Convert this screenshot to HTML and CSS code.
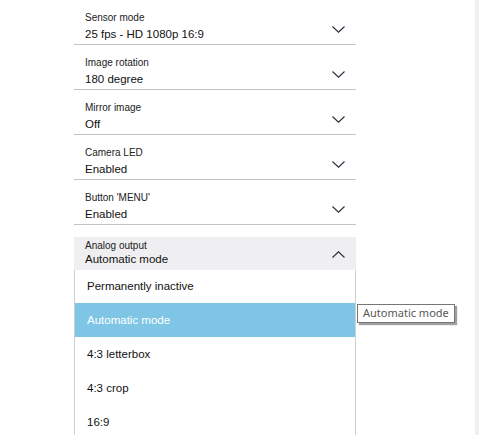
FILE: index.html
```html
<!DOCTYPE html>
<html>
<head>
<meta charset="utf-8">
<link rel="stylesheet" href="styles.css">
</head>
<body>
<div class="page">
  <div class="form">
    <div class="field">
      <div class="text"><div class="label">Sensor mode</div><div class="value">25 fps - HD 1080p 16:9</div></div>
      <svg class="chev" width="13" height="7" viewBox="0 0 13 7"><polyline points="0.5,0.5 6.5,6.2 12.5,0.5" /></svg>
    </div>
    <div class="field">
      <div class="text"><div class="label">Image rotation</div><div class="value">180 degree</div></div>
      <svg class="chev" width="13" height="7" viewBox="0 0 13 7"><polyline points="0.5,0.5 6.5,6.2 12.5,0.5" /></svg>
    </div>
    <div class="field">
      <div class="text"><div class="label">Mirror image</div><div class="value">Off</div></div>
      <svg class="chev" width="13" height="7" viewBox="0 0 13 7"><polyline points="0.5,0.5 6.5,6.2 12.5,0.5" /></svg>
    </div>
    <div class="field">
      <div class="text"><div class="label">Camera LED</div><div class="value">Enabled</div></div>
      <svg class="chev" width="13" height="7" viewBox="0 0 13 7"><polyline points="0.5,0.5 6.5,6.2 12.5,0.5" /></svg>
    </div>
    <div class="field">
      <div class="text"><div class="label">Button 'MENU'</div><div class="value">Enabled</div></div>
      <svg class="chev" width="13" height="7" viewBox="0 0 13 7"><polyline points="0.5,0.5 6.5,6.2 12.5,0.5" /></svg>
    </div>
    <div class="field open">
      <div class="text"><div class="label">Analog output</div><div class="value">Automatic mode</div></div>
      <svg class="chev" width="13" height="7" viewBox="0 0 13 7"><polyline points="0.5,6.5 6.5,0.8 12.5,6.5" /></svg>
    </div>
    <ul class="menu">
      <li>Permanently inactive</li>
      <li class="sel">Automatic mode</li>
      <li>4:3 letterbox</li>
      <li>4:3 crop</li>
      <li>16:9</li>
    </ul>
  </div>
  <div class="tooltip">Automatic mode</div>
  <div class="scroll"></div>
</div>
</body>
</html>
```
FILE: styles.css
```css
html, body {
  margin: 0;
  padding: 0;
  background: #ffffff;
  width: 479px;
  height: 435px;
  overflow: hidden;
}
.page {
  position: relative;
  width: 479px;
  height: 435px;
  font-family: "Liberation Sans", Arial, sans-serif;
  color: #1a1a1a;
}
.form {
  margin-left: 74px;
  width: 282px;
}
.field {
  display: flex;
  align-items: flex-start;
  justify-content: space-between;
  padding: 12px 11px 3px 11px;
  height: 29px;
  border-bottom: 1px solid #c4c4c4;
}
.text {
  display: flex;
  flex-direction: column;
}
.label {
  font-size: 10px;
  line-height: 12px;
  color: #222;
}
.value {
  font-size: 11.5px;
  line-height: 14px;
  margin-top: 3px;
  color: #111;
}
.chev {
  margin-top: 14px;
  fill: none;
  stroke: #2a2a3a;
  stroke-width: 1.1;
}
.field.open {
  margin-top: 12px;
  background: #efeff1;
  border-bottom: none;
  padding: 3px 11px 4px 11px;
  height: 26px;
}
.field.open .value {
  margin-top: 0;
}
.field.open .chev {
  margin-top: 11px;
}
.menu {
  list-style: none;
  margin: 0;
  padding: 0;
  border-left: 1px solid #cfcfcf;
  border-right: 1px solid #cfcfcf;
  background: #fff;
}
.menu li {
  height: 34px;
  line-height: 34px;
  padding-left: 12px;
  font-size: 11.5px;
  color: #111;
}
.menu li:first-child {
  height: 33px;
  line-height: 33px;
}
.menu li.sel {
  background: #7ec5e6;
  color: #ffffff;
}
.tooltip {
  position: absolute;
  left: 357px;
  top: 304px;
  height: 17px;
  line-height: 16px;
  padding: 0 5px;
  border: 1px solid #767676;
  background: #fff;
  font-family: "Noto Sans", "Open Sans", sans-serif;
  font-size: 11px;
  color: #575757;
  box-shadow: 2px 2px 1px #a0a0a0;
}
.scroll {
  position: absolute;
  right: 0;
  top: 0;
  width: 4px;
  height: 435px;
  background: #f0f0f0;
}
```
